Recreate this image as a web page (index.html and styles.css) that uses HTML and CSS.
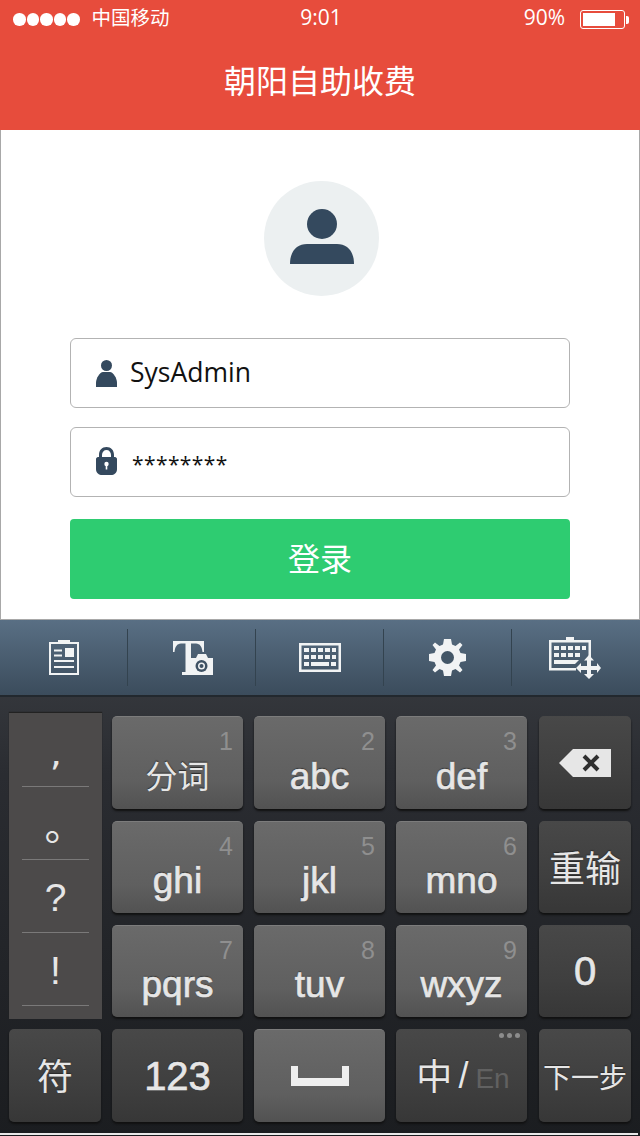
FILE: index.html
```html
<!DOCTYPE html>
<html lang="zh-CN">
<head>
  <meta charset="UTF-8" />
  <title>朝阳自助收费</title>
  <link rel="stylesheet" href="styles.css">
</head>
<body>

  <header class="top">
    <div class="status">
      <div class="status-left">
        <div class="dots"><i></i><i></i><i></i><i></i><i></i></div>
        <span class="carrier">中国移动</span>
      </div>
      <span class="clock">9:01</span>
      <div class="status-right">
        <span class="level">90%</span>
        <div class="battery"><div class="battery-fill"></div></div>
        <div class="battery-nub"></div>
      </div>
    </div>
    <h1 class="title">朝阳自助收费</h1>
  </header>

  <main class="login">
    <div class="avatar">
      <svg width="64" height="55" viewBox="0 0 64 55">
        <circle cx="32" cy="15" r="15" fill="#34495e"/>
        <path d="M0 55C0 42 7 35 17 35H47C57 35 64 42 64 55Z" fill="#34495e"/>
      </svg>
    </div>
    <div class="field">
      <svg class="field-icon" width="21" height="27" viewBox="0 0 21 27">
        <circle cx="10.5" cy="5.5" r="5.5" fill="#34495e"/>
        <path d="M0 27V23C0 18 4 12 7 12H14C17 12 21 18 21 23V27Z" fill="#34495e"/>
      </svg>
      <span class="field-text">SysAdmin</span>
    </div>
    <div class="field field-pass">
      <svg class="field-icon" width="21" height="28" viewBox="0 0 21 28">
        <path d="M3 12V8C3 3 6 0 10.500 0S18 3 18 8V12H15V8C15 5 13 3 10.500 3S6 5 6 8V12Z" fill="#34495e"/>
        <path d="M2 10H19C20 10 21 11 21 12V22C21 26 18 28 15 28H6C3 28 0 26 0 22V12C0 11 1 10 2 10Z" fill="#34495e"/>
        <circle cx="10.500" cy="17" r="2.200" fill="#fff"/>
        <rect x="9.700" y="17" width="1.600" height="5.500" fill="#fff"/>
      </svg>
      <span class="field-stars">********</span>
    </div>
    <button class="submit">登录</button>
  </main>

  <section class="keyboard">
    <div class="tools">
      <div class="tool">
        <svg width="30" height="35" viewBox="0 0 30 35" fill="none" stroke="#f1f3f4">
          <rect x="1" y="3" width="28" height="31" stroke-width="2"/>
          <rect x="9" y="0" width="12" height="4" fill="#f1f3f4" stroke="none"/>
          <path d="M5 10.500H13M5 15.500H13M5 21H25M5 27H25" stroke-width="2"/>
          <rect x="16" y="8" width="9" height="9" fill="#f1f3f4" stroke="none"/>
        </svg>
      </div>
      <div class="tool tool-text">
        <svg width="40" height="34" viewBox="0 0 40 34">
          <path d="M0 0H31V11H29.500C29 6 27 2.500 23 2.500H18V31H21V34H9V31H12.500V2.500H8C4 2.500 2 6 1.500 11H0Z" fill="#f1f3f4"/>
          <path d="M17 34V17H23L25 13H33L35 17H40V34Z" fill="#f1f3f4"/>
          <circle cx="28.500" cy="25" r="6" fill="#3f5264"/>
          <circle cx="28.500" cy="25" r="3.500" fill="#f1f3f4"/>
          <circle cx="28.500" cy="25" r="2" fill="#3f5264"/>
        </svg>
      </div>
      <div class="tool">
        <svg width="42" height="29" viewBox="0 0 42 29" fill="#f1f3f4">
          <path d="M0 0H42V29H0ZM2.500 2.500V26.500H39.500V2.500Z" fill-rule="evenodd"/>
          <path d="M5 5H10V9H5ZM12 5H17V9H12ZM19 5H24V9H19ZM26 5H31V9H26ZM33 5H37V9H33ZM5 12H10V16H5ZM12 12H17V16H12ZM19 12H24V16H19ZM26 12H31V16H26ZM33 12H37V16H33ZM5 19H10V23H5ZM12 19H30V23H12ZM32 19H37V23H32Z"/>
        </svg>
      </div>
      <div class="tool">
        <svg width="37" height="37" viewBox="0 0 37 37">
          <path d="M15 0H22L23 5.500 26.500 7 31 3.500 33.500 6 30 10.500 31.500 14 37 15V22L31.500 23 30 26.500 33.500 31 31 33.500 26.500 30 23 31.500 22 37H15L14 31.500 10.500 30 6 33.500 3.500 31 7 26.500 5.500 23 0 22V15L5.500 14 7 10.500 3.500 6 6 3.500 10.500 7 14 5.500Z" fill="#f1f3f4"/>
          <circle cx="18.500" cy="18.500" r="6.500" fill="#435667"/>
        </svg>
      </div>
      <div class="tool tool-move">
        <svg width="52" height="42" viewBox="0 0 52 42" fill="#f1f3f4">
          <path d="M0 3H17V0H25V3H42V20H39.500V5.500H2.500V31H27V33.500H0Z"/>
          <path d="M5 9H10V13H5ZM12 9H17V13H12ZM19 9H24V13H19ZM26 9H31V13H26ZM33 9H37V13H33ZM5 16H10V20H5ZM12 16H17V20H12ZM19 16H24V20H19ZM26 16H31V20H26ZM5 23H30L26 27H5Z"/>
          <path d="M40 18L45 23.500H42V29H48V26L52 31 48 36V33H42V37H45L40 42 35 37H38V33H32V36L27 31 32 26V29H38V23.500H35Z"/>
        </svg>
      </div>
    </div>

    <div class="keys">
      <div class="punct">
        <div class="punct-cell punct-tick">’</div>
        <div class="punct-cell punct-stop">。</div>
        <div class="punct-cell">?</div>
        <div class="punct-cell">!</div>
      </div>
      <div class="key key-light"><span class="num">1</span><span class="cn cn-word">分词</span></div>
      <div class="key key-light"><span class="num">2</span>abc</div>
      <div class="key key-light"><span class="num">3</span>def</div>
      <div class="key key-dark key-side key-center">
        <svg width="52" height="28" viewBox="0 0 52 28">
          <path d="M14 0H52V28H14L0 14Z" fill="#e6e6e6"/>
          <path d="M25 7L39 21M39 7L25 21" stroke="#2f2f2f" stroke-width="4"/>
        </svg>
      </div>

      <div class="key key-light"><span class="num">4</span>ghi</div>
      <div class="key key-light"><span class="num">5</span>jkl</div>
      <div class="key key-light"><span class="num">6</span>mno</div>
      <div class="key key-dark key-side key-center"><span class="cn cn-big">重输</span></div>

      <div class="key key-light"><span class="num">7</span>pqrs</div>
      <div class="key key-light"><span class="num">8</span>tuv</div>
      <div class="key key-light"><span class="num">9</span>wxyz</div>
      <div class="key key-dark key-side key-center key-digits">0</div>

      <div class="key key-dark key-center"><span class="cn cn-big">符</span></div>
      <div class="key key-dark key-center key-digits">123</div>
      <div class="key key-light key-center">
        <svg width="58" height="20" viewBox="0 0 58 20">
          <path d="M0 0H7V12H51V0H58V20H0Z" fill="#efefef"/>
        </svg>
      </div>
      <div class="key key-dark key-center key-lang">
        <span class="more"><i></i><i></i><i></i></span>
        <span class="cn cn-big">中</span><span class="slash">/</span><span class="en">En</span>
      </div>
      <div class="key key-dark key-side key-center"><span class="cn cn-next">下一步</span></div>
    </div>
    <div class="home-line"></div>
  </section>

</body>
</html>
```

FILE: styles.css
```css
* {
  box-sizing: border-box;
}

body {
  margin: 0;
  width: 640px;
  height: 1136px;
  overflow: hidden;
  display: flex;
  flex-direction: column;
  font-family: "Open Sans", "Noto Sans CJK SC", sans-serif;
  background: #fff;
}

/* red header */
.top {
  height: 130px;
  background: #e74c3c;
  color: #fff;
}

.status {
  height: 36px;
  padding: 0 11px 0 13px;
  display: grid;
  grid-template-columns: 1fr auto 1fr;
  align-items: center;
  font-family: "Noto Sans CJK SC", sans-serif;
  font-weight: 300;
}

.status-left,
.status-right {
  display: flex;
  align-items: center;
}

.status-right {
  justify-content: flex-end;
}

.dots {
  display: flex;
  gap: 1px;
  margin-top: 3px;
}

.dots i {
  width: 12.500px;
  height: 12.500px;
  border-radius: 50%;
  background: #fff;
}

.carrier {
  margin-left: 12px;
  padding-bottom: 3px;
  font-size: 19.500px;
  font-weight: 400;
}

.clock {
  padding-bottom: 3px;
  font-family: "Open Sans", sans-serif;
  font-size: 21px;
  font-weight: 400;
}

.level {
  padding-bottom: 3px;
  font-family: "Open Sans", sans-serif;
  font-size: 21px;
  font-weight: 400;
  margin-right: 15px;
}

.battery {
  width: 45px;
  height: 19px;
  margin-top: 3px;
  padding: 2px;
  border: 1px solid #fff;
  border-radius: 3px;
}

.battery-fill {
  width: 32px;
  height: 100%;
  background: #fff;
}

.battery-nub {
  width: 3px;
  height: 8px;
  margin: 3px 0 0 1px;
  background: #fff;
  border-radius: 0 2px 2px 0;
}

.title {
  margin: 0;
  height: 94px;
  padding-bottom: 8px;
  display: flex;
  align-items: center;
  justify-content: center;
  font-family: "Noto Sans CJK SC", sans-serif;
  font-size: 32px;
  font-weight: 400;
}

/* login form */
.login {
  height: 490px;
  padding: 51px 70px 0;
  display: flex;
  flex-direction: column;
  border: 1px solid #a8a8a8;
  border-width: 0 1px 1px;
  background: #fff;
}

.avatar {
  width: 115px;
  height: 115px;
  margin: 0 0 42px 193px;
  padding-bottom: 5px;
  display: flex;
  align-items: center;
  justify-content: center;
  border-radius: 50%;
  background: #ecf0f1;
}

.field {
  height: 70px;
  margin: 0 -1px;
  padding-left: 25px;
  display: flex;
  align-items: center;
  border: 1px solid #b3b3b3;
  border-radius: 6px;
}

.field-text {
  margin-left: 13px;
  padding-bottom: 3px;
  font-size: 26.500px;
  color: #111;
}

.field-pass {
  margin-top: 19px;
}

.field-pass .field-icon {
  margin-bottom: 2px;
}

.field-stars {
  margin-left: 15px;
  padding-top: 5px;
  font-size: 21px;
  line-height: 1;
  letter-spacing: 0.4px;
  color: #111;
}

.submit {
  height: 80px;
  margin: 22px -1px 0;
  padding-bottom: 6px;
  border: 0;
  border-radius: 4px;
  background: #2ecc71;
  color: #fff;
  font-family: "Noto Sans CJK SC", sans-serif;
  font-size: 32px;
  font-weight: 400;
}

/* keyboard */
.keyboard {
  flex: 1;
  display: flex;
  flex-direction: column;
  background: linear-gradient(#3d4045, #2a2c31 30%, #1b1d20);
}

.tools {
  height: 77px;
  display: grid;
  grid-template-columns: repeat(5, 128px);
  padding-bottom: 2px;
  background: linear-gradient(#596f84, #3b4c5c);
  border-bottom: 2px solid #22282e;
}

.tool {
  margin: 9px 0 7px;
  display: flex;
  align-items: center;
  justify-content: center;
  border-right: 1px solid #33434f;
}

.tool:last-child {
  border-right: 0;
}

.tool-text svg {
  margin-left: 3px;
}

.tool-move svg {
  margin-right: 2px;
}

.keys {
  padding: 19px 0 0 9px;
  display: grid;
  grid-template-columns: 92px 131px 131px 131px 93px;
  grid-template-rows: 93px 92px 92px 93px;
  gap: 12px 11px;
  font-family: "Liberation Sans", sans-serif;
  font-size: 37px;
  color: #e6e6e6;
  -webkit-text-stroke: 0.7px #e6e6e6;
}

.punct {
  grid-row: 1 / span 3;
  margin: -3px -1px -2px 0;
  padding-top: 1px;
  background: #4c4a4a;
  box-shadow: 0 -1px 1px #222;
  -webkit-text-stroke: 0;
}

.punct-cell {
  height: 73px;
  margin: 0 13px;
  padding-top: 4px;
  display: flex;
  align-items: center;
  justify-content: center;
  border-bottom: 1px solid #7a7979;
  font-size: 39px;
}

.punct-tick {
  padding-top: 50px;
  font-family: "DejaVu Sans", sans-serif;
  font-size: 38px;
  line-height: 20px;
}

.punct-stop {
  padding: 0 0 0 18px;
  font-family: "Noto Sans CJK SC", sans-serif;
  font-size: 40px;
}

.key {
  position: relative;
  display: flex;
  align-items: flex-end;
  justify-content: center;
  padding-bottom: 11px;
  line-height: 42px;
  border-radius: 5px;
  text-shadow: 0 -1px 1px #2a2a2a;
  box-shadow: 0 2px 2px #111;
}

.key-light {
  background: linear-gradient(#6a6a6a, #5f5f5f 70%, #525252);
  border-top: 1px solid #7c7c7c;
}

.key-dark {
  background: linear-gradient(#484848, #3f3f3f 60%, #373737);
}

.key-center {
  align-items: center;
  padding-bottom: 0;
}

.key-side {
  margin-left: 1px;
}

.key-digits {
  font-size: 40px;
}

.num {
  position: absolute;
  top: 9px;
  right: 10px;
  font-size: 25px;
  line-height: 30px;
  color: #8f8f8f;
  text-shadow: none;
  -webkit-text-stroke: 0;
}

.cn {
  font-family: "Noto Sans CJK SC", sans-serif;
  font-size: 32px;
  -webkit-text-stroke: 0;
}

.cn-word {
  padding-bottom: 3px;
}

.cn-big {
  padding-bottom: 3px;
  font-size: 36px;
}

.cn-next {
  font-size: 28px;
}

.key-lang {
  padding-left: 3px;
}

.slash {
  margin: 0 7px 0 6px;
  font-size: 36px;
  font-weight: 400;
  -webkit-text-stroke: 0;
}

.en {
  margin-top: 6px;
  font-size: 28px;
  color: #616161;
  text-shadow: none;
  -webkit-text-stroke: 0;
}

.more {
  position: absolute;
  top: 4px;
  right: 7px;
  display: flex;
  gap: 3px;
}

.more i {
  width: 5px;
  height: 5px;
  border-radius: 50%;
  background: #8c8c8c;
}

.home-line {
  height: 2px;
  margin: 11px 2px 0 0;
  background: #e8e8e8;
}
```
